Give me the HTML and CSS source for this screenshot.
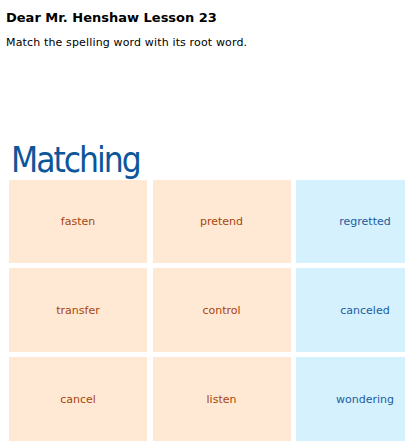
FILE: index.html
```html
<!DOCTYPE html>
<html lang="en">
<head>
    <meta charset="UTF-8">
    <title>Dear Mr. Henshaw Lesson 23</title>
    <link rel="stylesheet" href="styles.css">
</head>
<body>
<div class="intro">
    <h1 class="lesson-title">Dear Mr. Henshaw Lesson 23</h1>
    <p class="instructions">Match the spelling word with its root word.</p>
</div>

<div class="game">
    <h2 class="game-title">Matching</h2>
    <!-- three rows: two word cards, one root card -->
    <div class="board">
        <div class="card word">fasten</div>
        <div class="card word">pretend</div>
        <div class="card root">regretted</div>

        <div class="card word">transfer</div>
        <div class="card word">control</div>
        <div class="card root">canceled</div>

        <div class="card word">cancel</div>
        <div class="card word">listen</div>
        <div class="card root">wondering</div>
    </div>
</div>
</body>
</html>
```

FILE: styles.css
```css
/* --------------------
 Matching game page
 -------------------- */

:root {
    --word-bg-color: #ffe9d4;
    --word-text-color: #a8450c;
    --root-bg-color: #d4f1fd;
    --root-text-color: #1c5c9e;
    --title-color: #0c5699;
}

* {
    font-family: "DejaVu Sans", Verdana, sans-serif;
}

body {
    margin: 0;
    overflow: hidden;
    background-color: #fff;
}

.intro {
    padding: 10px 6px 0 6px;
    height: 130px;
}

.lesson-title {
    margin: 0;
    font-size: 13px;
    line-height: 16px;
    font-weight: bold;
    color: #000;
}

.instructions {
    margin: 9px 0 0 0;
    font-size: 11px;
    line-height: 16px;
    letter-spacing: 0.15px;
    color: #000;
}

/* the board is wider than the window, so clip it */
.game {
    padding-left: 9px;
    overflow: hidden;
}

.game-title {
    margin: 0 0 0 2px;
    font-family: "DejaVu Sans Condensed", "DejaVu Sans", sans-serif;
    font-size: 35px;
    line-height: 40px;
    letter-spacing: -2px;
    font-weight: normal;
    color: var(--title-color);
}

.board {
    display: grid;
    grid-template-columns: 138px 138px 109px;
    grid-template-rows: 83px 84px 84px;
    column-gap: 5.5px;
    row-gap: 5px;
}

.card {
    display: flex;
    align-items: center;
    justify-content: center;
    font-size: 11px;
    cursor: pointer;
}

.word {
    background-color: var(--word-bg-color);
    color: var(--word-text-color);
}

/* root cards run off the right edge; keep the word where
   the centre of a full-width card would be */
.root {
    padding-left: 29px;
    background-color: var(--root-bg-color);
    color: var(--root-text-color);
}
```
